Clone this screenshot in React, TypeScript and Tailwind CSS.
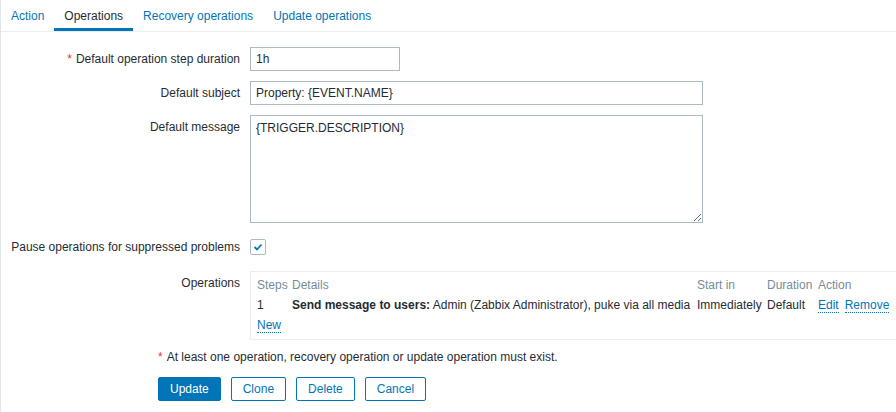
import React from 'react';

const tabs = ['Action', 'Operations', 'Recovery operations', 'Update operations'];

function Label({ children, required }: { children: React.ReactNode; required?: boolean }) {
  return (
    <div className="w-[239px] shrink-0 text-right pt-[4px] leading-[16px]">
      {required && <span className="text-[#e33734] mr-[4px]">*</span>}
      {children}
    </div>
  );
}

function DottedLink({ children }: { children: React.ReactNode }) {
  return (
    <a className="text-[#0275b8] border-b border-dotted border-[#0275b8] cursor-pointer">{children}</a>
  );
}

export default function App() {
  return (
    <div className="w-[896px] h-[412px] overflow-hidden bg-white border-l border-[#dfe4e7] font-['Liberation_Sans',Arial,sans-serif] text-[12px] text-[#1f2c33]">
      {/* Tabs */}
      <ul className="flex h-[32px] border-b border-[#ebeef0]">
        {tabs.map((t) => (
          <li
            key={t}
            className={
              'h-[31px] px-[10px] pt-[9px] leading-[14px] border-b-[3px] cursor-pointer ' +
              (t === 'Operations' ? 'border-[#0275b8] text-[#1f2c33]' : 'border-transparent text-[#0275b8]')
            }
          >
            {t}
          </li>
        ))}
      </ul>

      {/* Form */}
      <div className="pt-[15px]">
        <div className="flex">
          <Label required>Default operation step duration</Label>
          <input
            defaultValue="1h"
            className="ml-[10px] w-[150px] h-[24px] border border-[#acbbc2] px-[5px] outline-none"
          />
        </div>

        <div className="flex mt-[10px]">
          <Label>Default subject</Label>
          <input
            defaultValue="Property: {EVENT.NAME}"
            className="ml-[10px] w-[453px] h-[24px] border border-[#acbbc2] px-[5px] outline-none"
          />
        </div>

        <div className="flex mt-[10px]">
          <Label>Default message</Label>
          <textarea
            defaultValue="{TRIGGER.DESCRIPTION}"
            className="ml-[10px] w-[453px] h-[108px] border border-[#acbbc2] px-[5px] pt-[4px] leading-[16px] outline-none resize-both"
          />
        </div>

        <div className="flex items-center mt-[16px] h-[16px]">
          <div className="w-[239px] shrink-0 text-right leading-[16px]">Pause operations for suppressed problems</div>
          <div className="ml-[10px] w-[16px] h-[16px] border border-[#acbbc2] rounded-[2px] flex items-center justify-center">
            <svg width="10" height="8" viewBox="0 0 10 8">
              <polyline points="1.5,4 4,6.5 8.5,1.5" fill="none" stroke="#0275b8" strokeWidth="1.8" />
            </svg>
          </div>
        </div>

        <div className="flex mt-[16px]">
          <Label>Operations</Label>
          <div className="ml-[10px] flex-1 border-l border-t border-b border-[#ebeef0] pl-[6px] pt-[3px] pb-[4px]">
            <table className="table-fixed w-[651px] border-collapse leading-[14px] whitespace-nowrap">
              <thead>
                <tr className="text-[#768d99] text-left">
                  <th className="w-[35px] font-normal py-[3px]">Steps</th>
                  <th className="w-[405px] font-normal py-[3px]">Details</th>
                  <th className="w-[70px] font-normal py-[3px]">Start in</th>
                  <th className="w-[51px] font-normal py-[3px]">Duration</th>
                  <th className="w-[90px] font-normal py-[3px]">Action</th>
                </tr>
              </thead>
              <tbody>
                <tr>
                  <td className="py-[3px]">1</td>
                  <td className="py-[3px]">
                    <b>Send message to users:</b> Admin (Zabbix Administrator), puke via all media
                  </td>
                  <td className="py-[3px]">Immediately</td>
                  <td className="py-[3px]">Default</td>
                  <td className="py-[3px]">
                    <span className="mr-[6px]">
                      <DottedLink>Edit</DottedLink>
                    </span>
                    <DottedLink>Remove</DottedLink>
                  </td>
                </tr>
                <tr>
                  <td className="py-[3px]" colSpan={5}>
                    <DottedLink>New</DottedLink>
                  </td>
                </tr>
              </tbody>
            </table>
          </div>
        </div>

        <div className="pl-[157px] mt-[9px] leading-[16px]">
          <span className="text-[#e33734] mr-[4px]">*</span>
          At least one operation, recovery operation or update operation must exist.
        </div>

        <div className="pl-[157px] mt-[12px] flex gap-[10px]">
          <button className="h-[24px] px-[11px] rounded-[2px] border border-[#0275b8] bg-[#0275b8] text-white">Update</button>
          <button className="h-[24px] px-[11px] rounded-[2px] border border-[#0275b8] bg-white text-[#0275b8]">Clone</button>
          <button className="h-[24px] px-[11px] rounded-[2px] border border-[#0275b8] bg-white text-[#0275b8]">Delete</button>
          <button className="h-[24px] px-[11px] rounded-[2px] border border-[#0275b8] bg-white text-[#0275b8]">Cancel</button>
        </div>
      </div>
    </div>
  );
}
